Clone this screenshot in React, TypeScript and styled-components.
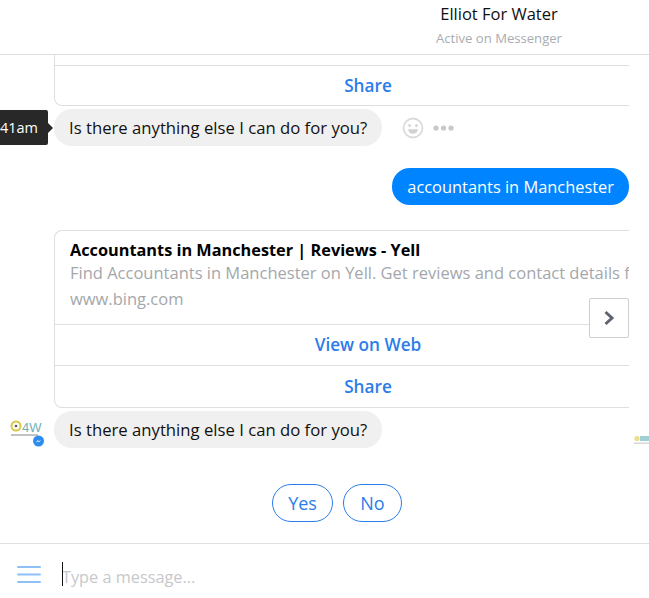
import styled, { createGlobalStyle } from "styled-components";

const FONT = `"Open Sans", "Noto Sans", "Liberation Sans", sans-serif`;

const GlobalStyle = createGlobalStyle`
    html, body {
        margin: 0;
        padding: 0;
        background: #fff;
        overflow: hidden;
    }
    * {
        box-sizing: border-box;
    }
`;

const Page = styled.div`
    width: 649px;
    height: 598px;
    display: flex;
    flex-direction: column;
    overflow: hidden;
    font-family: ${FONT};
    color: #1d2129;
`;

const Header = styled.header`
    height: 55px;
    flex: none;
    border-bottom: 1px solid #dddfe2;
    padding: 3px 0 0 349px;
    display: flex;
    flex-direction: column;
    align-items: center;
`;

const Title = styled.div`
    font-size: 16.5px;
    line-height: 22px;
    color: #111;
`;

const Subtitle = styled.div`
    font-size: 13.1px;
    line-height: 18px;
    margin-top: 4px;
    color: #a9acb1;
`;

const Thread = styled.main`
    position: relative;
    flex: 1;
    padding-left: 54px;
    overflow: hidden;
`;

const Card = styled.div<{ $cut?: boolean }>`
    width: 575px;
    border: 1px solid #dddfe2;
    border-right: none;
    border-top-width: ${(p) => (p.$cut ? 0 : 1)}px;
    border-radius: ${(p) => (p.$cut ? "0 0 0 8px" : "8px 0 0 8px")};
    overflow: hidden;
`;

const CardBody = styled.div`
    height: 93px;
    padding: 8px 0 0 15px;
    white-space: nowrap;
`;

const CardTitle = styled.div`
    font-size: 16.3px;
    line-height: 22px;
    font-weight: 700;
    color: #000;
`;

const CardText = styled.div<{ $h: number }>`
    font-size: 16.5px;
    line-height: ${(p) => p.$h}px;
    color: #a4a7ab;
`;

const CardAction = styled.div<{ $h: number }>`
    width: 626px;
    height: ${(p) => p.$h}px;
    padding-bottom: 1px;
    display: flex;
    align-items: center;
    justify-content: center;
    border-top: 1px solid #dddfe2;
    font-size: 17.2px;
    font-weight: 600;
    color: #2b7de9;
`;

const Spacer = styled.div<{ $h: number }>`
    height: ${(p) => p.$h}px;
`;

const Row = styled.div`
    display: flex;
    align-items: center;
`;

const Bubble = styled.div`
    height: 37px;
    padding: 0 15px;
    border-radius: 18px;
    display: inline-flex;
    align-items: center;
    white-space: nowrap;
    font-size: 16.7px;
    background: #f1f0f0;
    color: #111;
`;

const OwnBubble = styled(Bubble)`
    font-size: 16.4px;
    background: #0084ff;
    color: #fff;
`;

const OwnRow = styled.div`
    display: flex;
    justify-content: flex-end;
    width: 575px;
`;

const Actions = styled.div`
    display: flex;
    align-items: center;
    gap: 9px;
    margin-left: 20px;
`;

const Tooltip = styled.div`
    position: absolute;
    left: 0;
    top: 55px;
    width: 48px;
    height: 35px;
    background: #282828;
    border-radius: 0 2px 2px 0;
    color: #fff;
    font-size: 14.5px;
    display: flex;
    align-items: center;
    justify-content: flex-end;
    padding-right: 10px;
    white-space: nowrap;
    overflow: visible;

    &::after {
        content: "";
        position: absolute;
        right: -5px;
        top: 13px;
        border-left: 5px solid #282828;
        border-top: 5px solid transparent;
        border-bottom: 5px solid transparent;
    }
`;

const NextButton = styled.div`
    position: absolute;
    left: 589px;
    top: 243px;
    width: 40px;
    height: 40px;
    background: #fff;
    border: 1px solid #ccd0d5;
    border-radius: 2px;
    display: flex;
    align-items: center;
    justify-content: center;
`;

const AvatarWrap = styled.div`
    position: absolute;
    left: 10px;
    top: 364px;
    width: 36px;
    height: 30px;
`;

const PeekLogo = styled.div`
    position: absolute;
    left: 634px;
    top: 379px;
    width: 15px;
    height: 12px;
    overflow: hidden;

    svg {
        display: block;
    }
`;

const QuickReplies = styled.div`
    display: flex;
    justify-content: center;
    gap: 10px;
    width: 464px;
    margin-left: -54px;
    padding-left: 210px;
    margin-top: 36px;
`;

const QuickReply = styled.div<{ $w: number }>`
    width: ${(p) => p.$w}px;
    height: 38px;
    border: 1px solid #2b7de9;
    border-radius: 19px;
    color: #2b7de9;
    font-size: 18px;
    display: flex;
    align-items: center;
    justify-content: center;
`;

const Composer = styled.footer`
    height: 55px;
    flex: none;
    border-top: 1px solid #dddfe2;
    display: flex;
    align-items: center;
    padding: 6px 0 0 17px;
`;

const Input = styled.div`
    position: relative;
    margin: 5px 0 0 21px;
    font-size: 16.3px;
    color: #c6c8cb;
    &::before {
        content: "";
        position: absolute;
        left: 0;
        top: -4px;
        width: 1px;
        height: 24px;
        background: #111;
    }
`;

const AvatarLogo = () => (
    <svg width="36" height="30" viewBox="0 0 36 30">
        <circle cx="6" cy="7" r="4.5" fill="none" stroke="#d9c845" strokeWidth="2" />
        <circle cx="6" cy="7" r="1.3" fill="#555" />
        <text x="12" y="13" fontSize="13" fontFamily="Liberation Sans, sans-serif" fill="#72b0b8">4W</text>
        <rect x="1" y="15" width="27" height="2" fill="#a9a9a9" opacity="0.7" />
        <circle cx="28.5" cy="22" r="5.5" fill="#2d8cf0" />
        <path d="M25.8 23.4 L27.9 21.1 L29 22.2 L31.1 21 L29 23.2 L27.9 22.2 Z" fill="#fff" />
    </svg>
);

const PeekMark = () => (
    <svg width="15" height="12" viewBox="0 0 15 12">
        <circle cx="3" cy="4.5" r="2.6" fill="#ecdf8c" />
        <rect x="6" y="2" width="9" height="5" fill="#9fd0d6" />
        <rect x="0" y="8.5" width="15" height="1.5" fill="#d8d8d8" />
    </svg>
);

const SmileIcon = () => (
    <svg width="22" height="22" viewBox="0 0 22 22">
        <circle cx="11" cy="11" r="9.5" fill="none" stroke="#dadbdd" strokeWidth="1.8" />
        <circle cx="7.6" cy="8.6" r="1.4" fill="#d0d1d3" />
        <circle cx="14.4" cy="8.6" r="1.4" fill="#d0d1d3" />
        <path d="M6 12.2 H16 C15.6 15.4 13.5 16.8 11 16.8 C8.5 16.8 6.4 15.4 6 12.2 Z" fill="#d0d1d3" />
    </svg>
);

const DotsIcon = () => (
    <svg width="21" height="6" viewBox="0 0 21 6">
        <circle cx="3" cy="3" r="2.6" fill="#c6c8cb" />
        <circle cx="10.5" cy="3" r="2.6" fill="#c6c8cb" />
        <circle cx="18" cy="3" r="2.6" fill="#c6c8cb" />
    </svg>
);

const ChevronIcon = () => (
    <svg width="12" height="16" viewBox="0 0 12 16">
        <path d="M2.5 2 L9 8 L2.5 14" fill="none" stroke="#5e6570" strokeWidth="3" />
    </svg>
);

const MenuIcon = () => (
    <svg width="24" height="17" viewBox="0 0 24 17">
        <rect y="0" width="24" height="2" rx="1" fill="#8dc0f7" />
        <rect y="7.5" width="24" height="2" rx="1" fill="#8dc0f7" />
        <rect y="15" width="24" height="2" rx="1" fill="#8dc0f7" />
    </svg>
);

export default function App() {
    return (
        <>
            <GlobalStyle />
            <Page>
                <Header>
                    <Title>Elliot For Water</Title>
                    <Subtitle>Active on Messenger</Subtitle>
                </Header>
                <Thread>
                    <Card $cut>
                        <Spacer $h={10} />
                        <CardAction $h={40}>Share</CardAction>
                    </Card>
                    <Spacer $h={3} />
                    <Row>
                        <Bubble>Is there anything else I can do for you?</Bubble>
                        <Actions>
                            <SmileIcon />
                            <DotsIcon />
                        </Actions>
                    </Row>
                    <Spacer $h={22} />
                    <OwnRow>
                        <OwnBubble>accountants in Manchester</OwnBubble>
                    </OwnRow>
                    <Spacer $h={25} />
                    <Card>
                        <CardBody>
                            <CardTitle>Accountants in Manchester | Reviews - Yell</CardTitle>
                            <CardText $h={24}>Find Accountants in Manchester on Yell. Get reviews and contact details for each business</CardText>
                            <CardText $h={28}>www.bing.com</CardText>
                        </CardBody>
                        <CardAction $h={41}>View on Web</CardAction>
                        <CardAction $h={42}>Share</CardAction>
                    </Card>
                    <Spacer $h={3} />
                    <Row>
                        <Bubble>Is there anything else I can do for you?</Bubble>
                    </Row>
                    <QuickReplies>
                        <QuickReply $w={61}>Yes</QuickReply>
                        <QuickReply $w={59}>No</QuickReply>
                    </QuickReplies>
                    <Tooltip>41am</Tooltip>
                    <NextButton>
                        <ChevronIcon />
                    </NextButton>
                    <AvatarWrap>
                        <AvatarLogo />
                    </AvatarWrap>
                    <PeekLogo>
                        <PeekMark />
                    </PeekLogo>
                </Thread>
                <Composer>
                    <MenuIcon />
                    <Input>Type a message...</Input>
                </Composer>
            </Page>
        </>
    );
}
